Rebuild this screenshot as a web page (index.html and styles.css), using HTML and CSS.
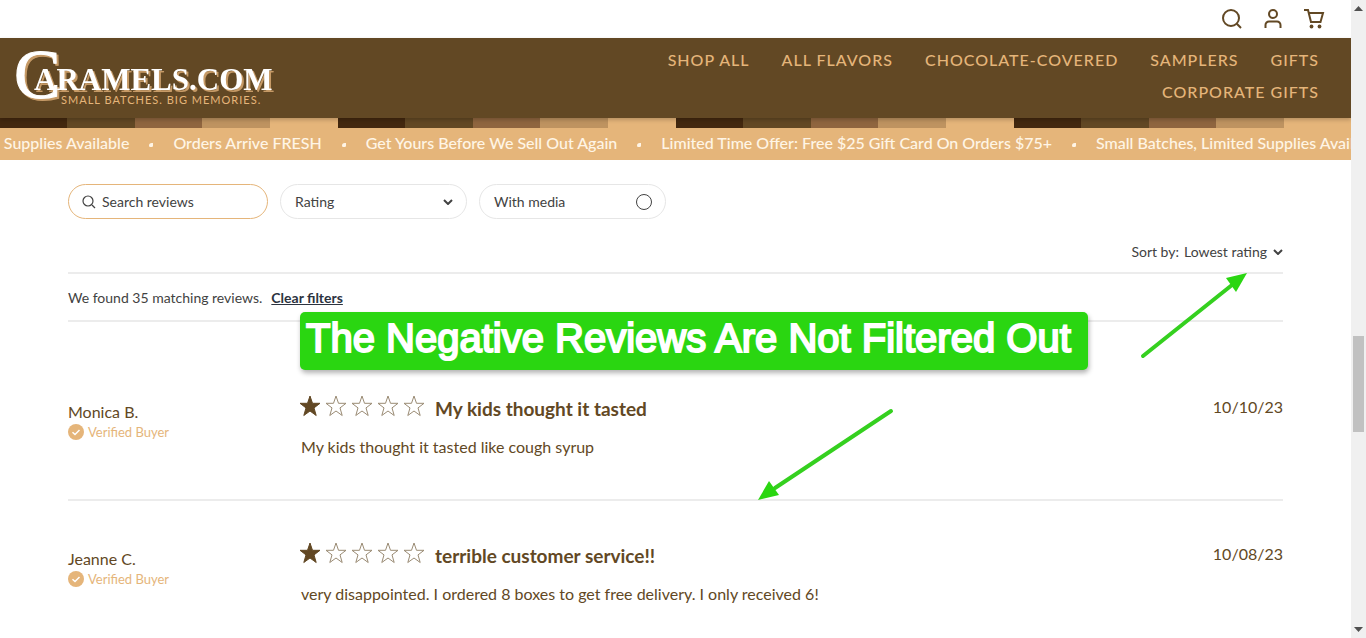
FILE: index.html
```
<!DOCTYPE html>
<html lang="en">
<head>
    <meta charset="UTF-8">
    <meta name="viewport" content="width=device-width, initial-scale=1.0">
    <title>Caramels.com</title>
    <link rel="stylesheet" href="styles.css">
</head>
<body>

<div class="page">
    <div class="topbar">
        <a href="#" aria-label="Search">
            <svg width="22" height="22" viewBox="0 0 22 22"><circle cx="10" cy="10" r="8"/><path d="M15.8 15.8L20 20"/></svg>
        </a>
        <a href="#" aria-label="Account">
            <svg width="22" height="22" viewBox="0 0 22 22"><circle cx="11" cy="6" r="4"/><path d="M3.500 20v-3a3.500 3.500 0 0 1 3.500-3.500h8a3.500 3.500 0 0 1 3.500 3.500v3"/></svg>
        </a>
        <a href="#" aria-label="Cart">
            <svg width="22" height="22" viewBox="0 0 22 22"><path d="M1 2h4l3 12h9.500l2.500-9H6"/><circle class="wheel" cx="8.500" cy="18.500" r="1.900"/><circle class="wheel" cx="16.500" cy="18.500" r="1.900"/></svg>
        </a>
    </div>

    <header class="header">
        <a href="#" class="logo">
            <svg width="260" height="60" viewBox="0 0 260 60">
                <g class="logo-face">
                    <text x="-1" y="52" class="logo-initial">C</text>
                    <text x="19" y="44" class="logo-name">ARAMELS.COM</text>
                </g>
                <text x="46" y="58" class="logo-tagline">SMALL BATCHES. BIG MEMORIES.</text>
            </svg>
        </a>
        <nav class="nav">
            <a href="#">SHOP ALL</a>
            <a href="#">ALL FLAVORS</a>
            <a href="#">CHOCOLATE-COVERED</a>
            <a href="#">SAMPLERS</a>
            <a href="#">GIFTS</a>
            <a href="#">CORPORATE GIFTS</a>
        </nav>
    </header>

    <div class="stripes"></div>
    <div class="ticker">
        <span>l Supplies Available</span>
        <i class="dot"></i>
        <span>Orders Arrive FRESH</span>
        <i class="dot"></i>
        <span>Get Yours Before We Sell Out Again</span>
        <i class="dot"></i>
        <span>Limited Time Offer: Free $25 Gift Card On Orders $75+</span>
        <i class="dot"></i>
        <span>Small Batches, Limited Supplies Available</span>
    </div>

    <main class="reviews">
        <form class="filters">
            <label class="pill pill-search">
                <svg width="14" height="14" viewBox="0 0 14 14"><circle cx="6" cy="6" r="5"/><path d="M10 10l3 3"/></svg>
                <input type="text" placeholder="Search reviews" aria-label="Search reviews">
            </label>
            <label class="pill">
                <select aria-label="Rating">
                    <option>Rating</option>
                </select>
                <svg class="chevron" width="10" height="6" viewBox="0 0 10 6"><path d="M1 1l4 4 4-4"/></svg>
            </label>
            <label class="pill">
                With media
                <input type="checkbox" class="round-check">
            </label>
        </form>

        <div class="sort">
            <label for="sort">Sort by:</label>
            <select id="sort">
                <option>Lowest rating</option>
            </select>
            <svg class="chevron" width="10" height="6" viewBox="0 0 10 6"><path d="M1 1l4 4 4-4"/></svg>
        </div>

        <div class="summary">
            <span>We found 35 matching reviews.</span>
            <a href="#">Clear filters</a>
        </div>

        <svg class="sprite" width="0" height="0">
            <symbol id="star" viewBox="0 0 22 22">
                <path d="M11 1l2.500 7.300h7.500l-6 4.600 2.200 7.600-6.200-4.500-6.200 4.500 2.200-7.600-6-4.600h7.500z"/>
            </symbol>
            <symbol id="verified" viewBox="0 0 16 16">
                <circle cx="8" cy="8" r="8" stroke="none"/><path d="M4.500 8.200l2.500 2.300 4.500-4.500" fill="none"/>
            </symbol>
        </svg>

        <div class="list">
            <article class="review">
                <div class="author">
                    <div class="name">Monica B.</div>
                    <div class="buyer"><svg><use href="#verified"/></svg>Verified Buyer</div>
                </div>
                <div class="content">
                    <div class="heading">
                        <div class="stars">
                            <svg class="full"><use href="#star"/></svg>
                            <svg><use href="#star"/></svg>
                            <svg><use href="#star"/></svg>
                            <svg><use href="#star"/></svg>
                            <svg><use href="#star"/></svg>
                        </div>
                        <h3>My kids thought it tasted</h3>
                    </div>
                    <p>My kids thought it tasted like cough syrup</p>
                </div>
                <time>10/10/23</time>
            </article>

            <article class="review">
                <div class="author">
                    <div class="name">Jeanne C.</div>
                    <div class="buyer"><svg><use href="#verified"/></svg>Verified Buyer</div>
                </div>
                <div class="content">
                    <div class="heading">
                        <div class="stars">
                            <svg class="full"><use href="#star"/></svg>
                            <svg><use href="#star"/></svg>
                            <svg><use href="#star"/></svg>
                            <svg><use href="#star"/></svg>
                            <svg><use href="#star"/></svg>
                        </div>
                        <h3>terrible customer service!!</h3>
                    </div>
                    <p>very disappointed. I ordered 8 boxes to get free delivery. I only received 6!</p>
                </div>
                <time>10/08/23</time>
            </article>
        </div>
    </main>
</div>

<div class="scrollbar">
    <svg width="9" height="5" viewBox="0 0 9 5"><path d="M0 5l4.500-5L9 5z"/></svg>
    <div class="thumb"></div>
    <svg width="9" height="5" viewBox="0 0 9 5"><path d="M0 0l4.500 5L9 0z"/></svg>
</div>

<!-- Annotations over the page -->
<div class="callout">The Negative Reviews Are Not Filtered Out</div>
<svg class="arrow arrow-sort" width="110" height="90" viewBox="0 0 110 90">
    <path class="line" d="M3 85L92 14"/><path class="head" d="M107 2L86 7l10 14z"/>
</svg>
<svg class="arrow arrow-review" width="140" height="96" viewBox="0 0 140 96">
    <path class="line" d="M134 6L18 83"/><path class="head" d="M1 95l11-19 10 14z"/>
</svg>

</body>
</html>
```
FILE: styles.css
```
* {
    box-sizing: border-box;
}
body {
    margin: 0;
    height: 100vh;
    display: grid;
    grid-template-columns: minmax(0, 1fr) 15px;
    position: relative;
    overflow: hidden;
    background-color: #fff;
    color: #624824;
    font-family: Lato, sans-serif;
    font-size: 16px;
    line-height: 20px;
}
a {
    color: inherit;
    text-decoration: none;
}
svg {
    display: block;
    flex: none;
    fill: none;
    stroke: currentColor;
}
.page {
    overflow: hidden;
}

/* Header */
.topbar {
    display: flex;
    justify-content: flex-end;
    align-items: center;
    gap: 19px;
    height: 38px;
    padding: 0 26px;
}
.topbar svg {
    stroke-width: 2;
}
.topbar .wheel {
    fill: currentColor;
    stroke: none;
}
.header {
    display: flex;
    justify-content: space-between;
    align-items: center;
    position: relative;
    height: 80px;
    padding: 0 32px 4px 15px;
    background-color: #624824;
    box-shadow: 0 2px 4px rgba(0, 0, 0, 0.2);
}
.logo svg {
    stroke: none;
    overflow: visible;
}
.logo-initial,
.logo-name {
    font-family: "Liberation Serif", serif;
}
.logo-initial {
    font-size: 70px;
    stroke: #fff;
}
.logo-name {
    font-size: 31px;
    font-weight: bold;
}
.logo-face {
    fill: #fff;
    filter: drop-shadow(2px 2px 0 #c69a66);
}
.logo-tagline {
    fill: #e5b57a;
    font-size: 11px;
    letter-spacing: 1px;
}
.nav {
    display: flex;
    flex-wrap: wrap;
    justify-content: flex-end;
    column-gap: 32px;
    max-width: 700px;
    color: #e5b57a;
    font-size: 16px;
    font-weight: 500;
    line-height: 32px;
    letter-spacing: 1px;
}

/* Ticker */
.stripes {
    height: 10px;
    background: repeating-linear-gradient(90deg,
        #43280f 0 67px,
        #624824 67px 135px,
        #8f653f 135px 202px,
        #be9360 202px 270px,
        #e5b57a 270px 338px);
}
.ticker {
    display: flex;
    align-items: center;
    gap: 20px;
    height: 32px;
    margin-left: -4px;
    padding-bottom: 3px;
    overflow: hidden;
    background-color: #e5b57a;
    color: #fff5e6;
    font-size: 16px;
    font-weight: 500;
    white-space: nowrap;
}
.dot {
    flex: none;
    width: 4px;
    height: 4px;
    margin-top: 4px;
    border-radius: 4px 0 2px 2px;
    background-color: #fff5e6;
}

/* Reviews */
.reviews {
    padding: 24px 68px;
}
.filters {
    display: flex;
    gap: 12px;
    color: #424242;
    font-size: 14px;
}
.pill {
    display: flex;
    align-items: center;
    justify-content: space-between;
    width: 187px;
    height: 35px;
    padding: 0 13px 0 14px;
    border: 1px solid #e6e6e6;
    border-radius: 18px;
}
.pill-search {
    gap: 6px;
    width: 200px;
    padding: 0 13px;
    border-color: #e5b57a;
}
.pill input[type="text"] {
    flex: 1;
    min-width: 0;
    padding: 0;
    border: 0;
    outline: 0;
    background: none;
    font: inherit;
}
.pill input::placeholder {
    color: #424242;
}
.pill svg {
    stroke-width: 1.2;
}
select {
    appearance: none;
    padding: 0;
    border: 0;
    background: none;
    color: inherit;
    font: inherit;
}
.pill select {
    flex: 1;
}
.pill .chevron,
.chevron {
    stroke-width: 2;
}
.round-check {
    appearance: none;
    width: 16px;
    height: 16px;
    margin: 0;
    border: 1px solid #424242;
    border-radius: 50%;
}
.sort {
    display: flex;
    justify-content: flex-end;
    align-items: center;
    gap: 5px;
    height: 55px;
    padding-top: 13px;
    border-bottom: 2px solid #ececec;
    color: #424242;
    font-size: 14px;
}
.summary {
    display: flex;
    align-items: center;
    gap: 9px;
    height: 48px;
    padding-top: 2px;
    border-bottom: 2px solid #ececec;
    color: #424242;
    font-size: 14px;
}
.summary a {
    color: #2c3340;
    font-weight: bold;
    text-decoration: underline;
}
.sprite {
    position: absolute;
}
.list {
    padding-top: 32px;
}
.review {
    display: flex;
    height: 147px;
    padding-top: 41px;
    border-bottom: 2px solid #ececec;
}
.author {
    width: 231px;
    padding-top: 7px;
}
.buyer {
    display: flex;
    align-items: center;
    gap: 4px;
    color: #e5b57a;
    font-size: 13px;
}
.buyer svg {
    width: 16px;
    height: 16px;
    fill: #e5b57a;
    stroke: #fff;
    stroke-width: 1.5;
}
.content {
    flex: 1;
}
.heading {
    display: flex;
    gap: 10px;
    height: 28px;
}
.stars {
    display: flex;
    gap: 4px;
}
.stars svg {
    width: 22px;
    height: 22px;
    stroke: #9a8b74;
}
.stars .full {
    fill: #624824;
    stroke: #624824;
}
h3 {
    margin: 0;
    font-size: 19px;
    line-height: 28px;
}
p {
    margin: 14px 0 0 2px;
}
time {
    padding-top: 2px;
}

/* Scrollbar */
.scrollbar {
    display: flex;
    flex-direction: column;
    align-items: center;
    padding: 6px 0;
    background-color: #f0f0f0;
}
.scrollbar svg {
    fill: #505050;
    stroke: none;
}
.thumb {
    width: 11px;
    height: 96px;
    margin: 325px 0 auto;
    background-color: #c1c1c1;
}

/* Annotations */
.callout {
    position: absolute;
    left: 300px;
    top: 312px;
    padding: 0 17px 6px 6px;
    border-radius: 5px;
    background-color: #2ad611;
    box-shadow: 1px 3px 5px rgba(0, 0, 0, 0.3);
    color: #fff;
    font-family: "Liberation Sans", Arial, sans-serif;
    font-size: 40px;
    line-height: 52px;
    -webkit-text-stroke: 2px #fff;
    white-space: nowrap;
}
.arrow {
    position: absolute;
}
.arrow-sort {
    left: 1140px;
    top: 271px;
}
.arrow-review {
    left: 757px;
    top: 405px;
}
.arrow .line {
    stroke: #35d01f;
    stroke-width: 4;
    stroke-linecap: round;
}
.arrow .head {
    fill: #2ad611;
    stroke: none;
}
```
